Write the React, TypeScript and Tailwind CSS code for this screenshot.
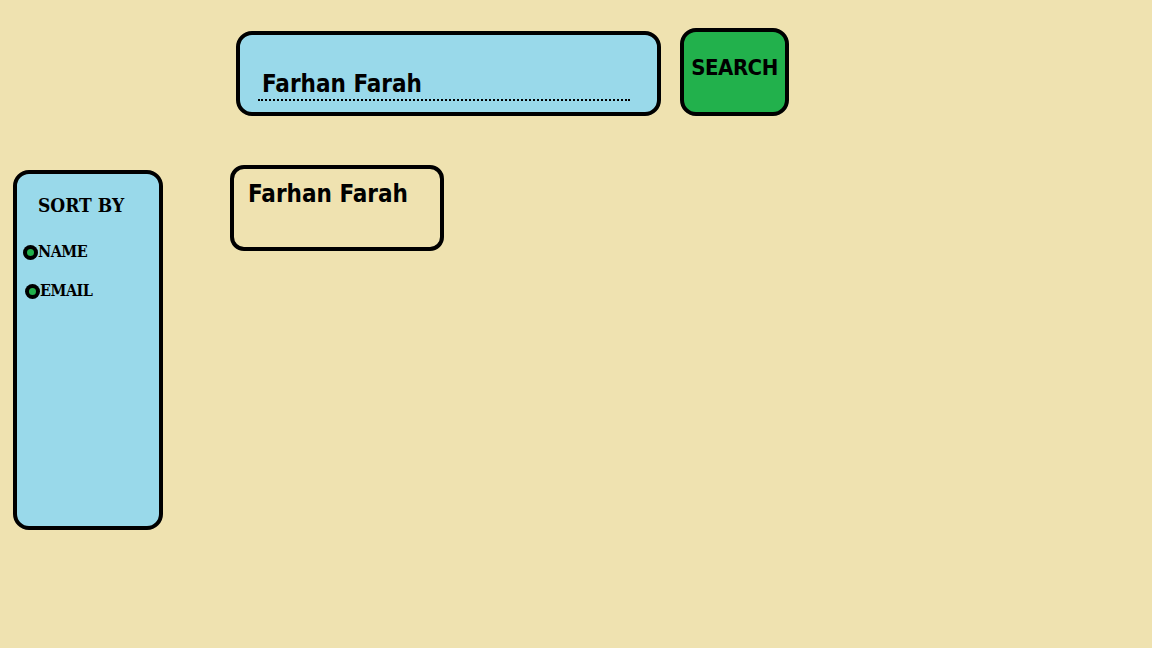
import React from "react";

const cond = { fontFamily: '"DejaVu Sans Condensed", "DejaVu Sans", sans-serif' };
const serif = { fontFamily: '"DejaVu Serif Condensed", "DejaVu Serif", serif' };

function Radio({ label, ml }: { label: string; ml: string }) {
  return (
    <div className={`flex items-center ${ml}`}>
      <span className="flex h-[15px] w-[15px] items-center justify-center rounded-full bg-black">
        <span className="h-[7px] w-[7px] rounded-full bg-[#22B14C]" />
      </span>
      <span className="text-[16px] font-bold leading-none tracking-[-0.5px] text-black" style={serif}>
        {label}
      </span>
    </div>
  );
}

export default function App() {
  return (
    <div className="h-[648px] w-full overflow-hidden bg-[#EFE2B0]">
      <div className="flex items-end gap-[19px] pl-[236px] pt-[28px]">
        <div className="flex h-[85px] w-[425px] flex-col justify-end rounded-[16px] border-4 border-black bg-[#99D9EA] pb-[11px] pl-[18px]">
          <div className="pl-[4px] text-[24px] font-bold leading-none text-black" style={cond}>
            Farhan Farah
          </div>
          <div className="mt-[3px] w-[372px] border-b-2 border-dotted border-black" />
        </div>
        <button className="flex h-[88px] w-[109px] items-center justify-center rounded-[16px] border-4 border-black bg-[#22B14C] pb-[8px]">
          <span className="text-[22px] font-bold leading-none tracking-[-0.5px] text-black" style={cond}>
            SEARCH
          </span>
        </button>
      </div>
      <div className="mt-[49px] flex items-start">
        <aside className="ml-[13px] mt-[5px] h-[360px] w-[150px] rounded-[16px] border-4 border-black bg-[#99D9EA]">
          <div className="pl-[21px] pt-[22px] text-[19px] font-bold leading-none text-black" style={serif}>
            SORT BY
          </div>
          <div className="mt-[29px] flex flex-col gap-[23px]">
            <Radio label="NAME" ml="ml-[6px]" />
            <Radio label="EMAIL" ml="ml-[8px]" />
          </div>
        </aside>
        <div className="ml-[67px] h-[86px] w-[214px] rounded-[14px] border-4 border-black pl-[14px] pt-[13px]">
          <div className="text-[24px] font-bold leading-none text-black" style={cond}>
            Farhan Farah
          </div>
        </div>
      </div>
    </div>
  );
}
